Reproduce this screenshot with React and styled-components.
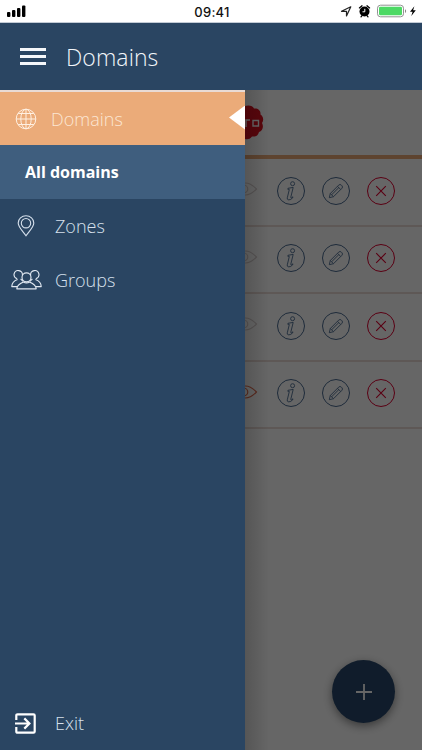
import React from "react";
import styled, { createGlobalStyle } from "styled-components";

const GlobalStyle = createGlobalStyle`
  * {
    box-sizing: border-box;
  }

  body {
    margin: 0;
    font-family: "Open Sans", "Noto Sans", sans-serif;
    background-color: #fff;
  }

  svg {
    display: block;
    flex-shrink: 0;
  }
`;

const Screen = styled.div`
  display: flex;
  flex-direction: column;
  width: 422px;
  height: 750px;
  overflow: hidden;
`;

const StatusBar = styled.div`
  display: grid;
  grid-template-columns: 1fr auto 1fr;
  align-items: center;
  height: 23px;
  padding: 0 5px 0 7px;
  background-color: #fff;
  border-bottom: 1px solid #c3cbd5;
`;

const Clock = styled.time`
  padding-top: 1px;
  color: #111;
  font-family: Inter, sans-serif;
  font-size: 13px;
  line-height: 20px;
  font-weight: 500;
  letter-spacing: 0.25px;
`;

const StatusIcons = styled.div`
  display: flex;
  align-items: center;
  justify-content: flex-end;
`;

const Header = styled.header`
  display: flex;
  align-items: center;
  gap: 20px;
  height: 67px;
  padding-left: 20px;
  background-color: #2a4562;
`;

const MenuButton = styled.button`
  display: flex;
  flex-direction: column;
  gap: 4px;
  width: 26px;
  padding: 0;
  border: 0;
  background: none;
`;

const MenuLine = styled.span`
  height: 3px;
  background-color: #f5f7fa;
`;

const Title = styled.h1`
  margin: 0;
  padding-top: 1px;
  color: #f2f6fa;
  font-size: 23px;
  font-weight: 300;
  line-height: 32px;
  letter-spacing: 0.1px;
`;

const Body = styled.div`
  position: relative;
  display: flex;
  flex: 1;
`;

const Drawer = styled.nav`
  display: flex;
  flex-direction: column;
  width: 245px;
  background-color: #2a4562;
  border-top: 2px solid #e9dbd5;
`;

const MenuItem = styled.a`
  display: flex;
  align-items: center;
  height: ${({ $height }) => $height || 54}px;
  padding-left: ${({ $inset }) => $inset}px;
  gap: ${({ $gap }) => $gap}px;
  color: ${({ $active }) => ($active ? "#fbe6d3" : "#d6e0ec")};
  background-color: ${({ $active }) => ($active ? "#ebab79" : "transparent")};
  font-size: 18px;
  font-weight: 300;
  line-height: 24px;
`;

const SubItem = styled.a`
  display: flex;
  align-items: center;
  height: 54px;
  padding-left: 25px;
  background-color: #3f5e7e;
  color: #fff;
  font-size: 16px;
  font-weight: 700;
`;

const ActiveMarker = styled.span`
  width: 16px;
  height: 24px;
  margin: 0 0 2px auto;
  background-color: #fff;
  clip-path: polygon(100% 0, 100% 100%, 0 50%);
`;

const Spacer = styled.div`
  flex: 1;
`;

const Content = styled.main`
  width: 177px;
  background-color: #fff;
`;

const Brand = styled.div`
  height: 69px;
  padding-top: 15px;
  border-bottom: 4px solid #ebab79;
  overflow: hidden;
`;

const Row = styled.div`
  display: flex;
  align-items: center;
  height: 67.5px;
  padding-bottom: 2px;
  border-bottom: 2px solid #ecdcd8;
  gap: 17px;
`;

const VisibilityIcon = styled.svg`
  width: 15px;
  margin-bottom: 3px;
  color: ${({ $on }) => ($on ? "#e06c50" : "#d8d0d0")};
`;

const RoundButton = styled.button`
  display: flex;
  align-items: center;
  justify-content: center;
  flex-shrink: 0;
  width: 28px;
  height: 28px;
  padding: 0;
  border: 1.3px solid currentColor;
  border-radius: 50%;
  background: none;
  color: ${({ $danger }) => ($danger ? "#e00030" : "#4b6b91")};
`;

const AddButton = styled.button`
  position: absolute;
  right: 27px;
  bottom: 27px;
  display: flex;
  align-items: center;
  justify-content: center;
  width: 63px;
  height: 63px;
  padding: 0;
  border: 0;
  border-radius: 50%;
  background-color: #28486b;
  color: #fff;
  box-shadow: 0 3px 10px rgba(0, 0, 0, 0.45);
`;

const Backdrop = styled.div`
  position: absolute;
  top: 0;
  right: 0;
  bottom: 0;
  left: 245px;
  background: linear-gradient(90deg, rgba(0, 0, 0, 0.16), transparent 24px),
    rgba(0, 0, 0, 0.6);
`;

function SignalIcon() {
  return (
    <svg width="19" height="12" viewBox="0 0 19 12" fill="#000">
      <rect x="0" y="7" width="3.4" height="5" rx="1" />
      <rect x="5" y="5" width="3.4" height="7" rx="1" />
      <rect x="10" y="3" width="3.4" height="9" rx="1" />
      <rect x="15" y="0.5" width="3.4" height="11.5" rx="1" />
    </svg>
  );
}

function DeviceIcons() {
  return (
    <svg width="77" height="14" viewBox="0 0 77 14" fill="none">
      <path
        d="M1.5 7.3 10.8 2.8 6.5 12V7.3Z"
        stroke="#222"
        strokeWidth="1.2"
        strokeLinejoin="round"
      />
      <circle cx="24.5" cy="7.5" r="5" fill="#000" />
      <path
        d="M19.4 3.9 22 1.8M29.6 3.9 27 1.8M21 12.8l1-1.2M28 12.8l-1-1.2"
        stroke="#000"
        strokeWidth="1.3"
        strokeLinecap="round"
      />
      <path d="M24.8 4.8v3h-2.3" stroke="#fff" strokeWidth="1" />
      <rect x="37.5" y="1.2" width="26" height="11.6" rx="3" stroke="#929292" />
      <rect x="39" y="2.7" width="23" height="8.6" rx="1.4" fill="#4cd964" />
      <path d="M65 5.2c1.5.5 1.5 3.2 0 3.7Z" fill="#888" />
      <path d="M74.4 2.2 70 7.7h2.6L71.3 12l4.5-5.7h-2.7Z" fill="#000" />
    </svg>
  );
}

function GlobeIcon() {
  return (
    <svg
      width="22"
      height="22"
      viewBox="0 0 22 22"
      fill="none"
      stroke="#fff0e2"
      strokeWidth="1"
    >
      <circle cx="11" cy="11" r="9.8" />
      <ellipse cx="11" cy="11" rx="5.2" ry="9.8" />
      <path d="M11 1.2v19.6M1.2 11h19.6M3.2 5.5h15.6M3.2 16.5h15.6" />
    </svg>
  );
}

function PinIcon() {
  return (
    <svg
      width="18"
      height="22"
      viewBox="0 0 18 22"
      fill="none"
      stroke="#d6e0ec"
      strokeWidth="1.1"
    >
      <path d="M9 20.8C6.3 16.6 1.2 12.2 1.2 8a7.8 7.2 0 0 1 15.6 0c0 4.2-5.1 8.6-7.8 12.8Z" />
      <circle cx="9" cy="8.2" r="4.7" />
    </svg>
  );
}

function GroupIcon() {
  return (
    <svg
      width="31"
      height="20"
      viewBox="0 0 31 20"
      fill="none"
      stroke="#e1e8f1"
      strokeWidth="1.15"
      strokeLinejoin="round"
    >
      <circle cx="15.5" cy="7.3" r="4.5" />
      <path d="M5.8 18.8c.1-3.5 2.5-5 6.6-6.8 2 1.2 4.2 1.2 6.2 0 4.1 1.8 6.5 3.3 6.6 6.8Z" />
      <path d="M11.4 5.2A4.2 4.2 0 1 0 6.2 8.8M6.6 9.5C3 10.7.9 12.8.8 16.6h5.7M19.6 5.2a4.2 4.2 0 1 1 5.2 3.6M24.4 9.5c3.6 1.2 5.7 3.3 5.8 7.1h-5.7M9.6 8.8l2.5 2.6M21.4 8.8l-2.5 2.6" />
    </svg>
  );
}

function ExitIcon() {
  return (
    <svg
      width="21"
      height="21"
      viewBox="0 0 21 21"
      fill="none"
      stroke="#fff"
      strokeWidth="2.2"
    >
      <path d="M1.3 7V2.5q0-1.2 1.2-1.2h16q1.2 0 1.2 1.2v16q0 1.2-1.2 1.2h-16q-1.2 0-1.2-1.2V14" />
      <path d="M0 10.5h14M9.3 5.4l5.1 5.1-5.1 5.1" />
    </svg>
  );
}

function BrandSeal() {
  return (
    <svg width="20" height="36" viewBox="0 0 20 36">
      <path
        d="M0 1C4-.5 8 1 9 3.5c4-.5 7 2 6.5 6 3 2 3.5 6 1.5 8.5 2 4 .5 8-3 9-1 4-4 5-7 4.5-2 3-5 3-7 2.5Z"
        fill="#df1020"
      />
      <path
        d="M1 22v-7h4M8 15.5h5.5v5.5H8Z"
        fill="none"
        stroke="#fff"
        strokeWidth="1.4"
      />
    </svg>
  );
}

function EyeIcon({ on }) {
  return (
    <VisibilityIcon
      $on={on}
      width="15"
      height="16"
      viewBox="0 0 15 16"
      fill="none"
      stroke="currentColor"
      strokeWidth="1.1"
    >
      <path d="M-10 8Q0-4 11.5 8 0 20-10 8Z" />
      <circle cx="-1" cy="8" r="3.8" />
    </VisibilityIcon>
  );
}

function InfoIcon() {
  return (
    <svg
      width="12"
      height="20"
      viewBox="0 0 12 20"
      fill="none"
      stroke="currentColor"
      strokeWidth="0.9"
      strokeLinejoin="round"
    >
      <circle cx="7.6" cy="2.7" r="2" />
      <path d="M3 7.3 8.2 6.4 5.8 16.2q-.2 1 .7.6l1.4-1-.3 1.2q-2.5 2.4-4.5 1.8-1.2-.4-.8-2L4.3 8.5 2.7 8.2Z" />
    </svg>
  );
}

function PencilIcon() {
  return (
    <svg
      width="16"
      height="16"
      viewBox="0 0 16 16"
      fill="none"
      stroke="currentColor"
      strokeWidth="0.9"
      strokeLinejoin="round"
    >
      <path d="m1.3 14.7 1-4.2 8.4-8.4q1.3-1.3 2.6 0l.6.6q1.3 1.3 0 2.6l-8.4 8.4Z" />
      <path d="m2.3 10.5 3.2 3.2M9.5 3.3l3.2 3.2M3.7 11.7l7.2-7.2" />
    </svg>
  );
}

function CloseIcon() {
  return (
    <svg width="12" height="12" viewBox="0 0 12 12" stroke="currentColor">
      <path d="m1.2 1.2 9.6 9.6M10.8 1.2l-9.6 9.6" strokeWidth="1.1" />
    </svg>
  );
}

const domains = [
  { id: 1, visible: false },
  { id: 2, visible: false },
  { id: 3, visible: false },
  { id: 4, visible: true },
];

function DomainRow({ visible }) {
  return (
    <Row>
      <EyeIcon on={visible} />
      <RoundButton aria-label="Info">
        <InfoIcon />
      </RoundButton>
      <RoundButton aria-label="Edit">
        <PencilIcon />
      </RoundButton>
      <RoundButton $danger aria-label="Delete">
        <CloseIcon />
      </RoundButton>
    </Row>
  );
}

function App() {
  return (
    <>
      <GlobalStyle />
      <Screen>
        <StatusBar>
          <SignalIcon />
          <Clock>09:41</Clock>
          <StatusIcons>
            <DeviceIcons />
          </StatusIcons>
        </StatusBar>
        <Header>
          <MenuButton aria-label="Menu">
            <MenuLine />
            <MenuLine />
            <MenuLine />
          </MenuButton>
          <Title>Domains</Title>
        </Header>
        <Body>
          <Drawer>
            <MenuItem $active $height={53} $inset={15} $gap={14}>
              <GlobeIcon />
              Domains
              <ActiveMarker />
            </MenuItem>
            <SubItem>All domains</SubItem>
            <MenuItem $inset={17} $gap={20}>
              <PinIcon />
              Zones
            </MenuItem>
            <MenuItem $inset={11} $gap={13}>
              <GroupIcon />
              Groups
            </MenuItem>
            <Spacer />
            <MenuItem $inset={15} $gap={19}>
              <ExitIcon />
              Exit
            </MenuItem>
          </Drawer>
          <Content>
            <Brand>
              <BrandSeal />
            </Brand>
            {domains.map((domain) => (
              <DomainRow key={domain.id} visible={domain.visible} />
            ))}
          </Content>
          <AddButton aria-label="Add">
            <svg width="16" height="16" viewBox="0 0 16 16">
              <path d="M8 0v16M0 8h16" stroke="currentColor" strokeWidth="1.8" />
            </svg>
          </AddButton>
          <Backdrop />
        </Body>
      </Screen>
    </>
  );
}

export default App;
